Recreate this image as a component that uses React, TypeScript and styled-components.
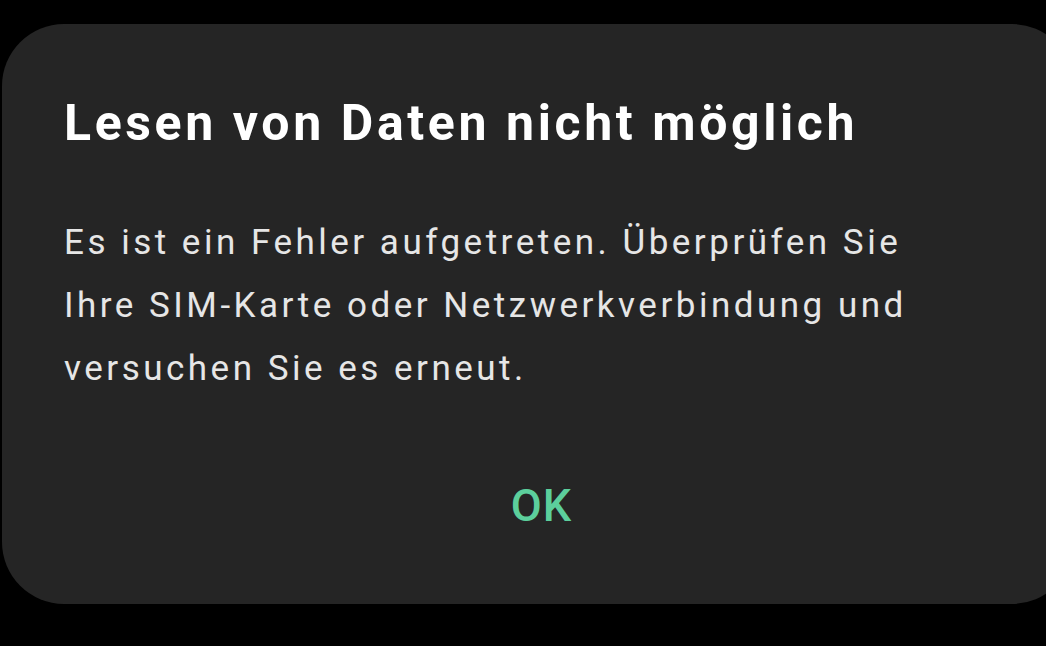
import styled, { createGlobalStyle } from "styled-components";

const GlobalStyle = createGlobalStyle`
  html, body {
    margin: 0;
    padding: 0;
    background: #000000;
    overflow: hidden;
  }
  body {
    font-family: Roboto, "Noto Sans", "Liberation Sans", sans-serif;
  }
`;

const Screen = styled.div`
  width: 1046px;
  height: 646px;
  padding: 24px 0 0 2px;
  box-sizing: border-box;
  overflow: hidden;
`;

const Dialog = styled.div`
  width: 1072px;
  height: 580px;
  box-sizing: border-box;
  padding: 69px 0 0 62px;
  border-radius: 62px;
  background: #252525;
  display: flex;
  flex-direction: column;
`;

const Title = styled.h1`
  margin: 0;
  font-size: 50px;
  line-height: 60px;
  font-weight: 700;
  letter-spacing: 3.6px;
  color: #ffffff;
`;

const Message = styled.p`
  margin: 58px 0 0 0;
  width: 880px;
  font-size: 35px;
  line-height: 63px;
  font-weight: 400;
  letter-spacing: 3.5px;
  color: #e6e6e6;
`;

const Actions = styled.div`
  margin-top: 76px;
  display: flex;
  justify-content: center;
  padding-right: 55px;
`;

const Button = styled.button`
  border: none;
  background: none;
  padding: 0;
  font-family: inherit;
  font-size: 45px;
  line-height: 60px;
  font-weight: 500;
  letter-spacing: 1px;
  color: #5ccf9c;
  cursor: pointer;
`;

export default function App() {
  return (
    <>
      <GlobalStyle />
      <Screen>
        <Dialog>
          <Title>Lesen von Daten nicht möglich</Title>
          <Message>
            Es ist ein Fehler aufgetreten. Überprüfen Sie Ihre SIM-Karte oder
            Netzwerkverbindung und versuchen Sie es erneut.
          </Message>
          <Actions>
            <Button>OK</Button>
          </Actions>
        </Dialog>
      </Screen>
    </>
  );
}
